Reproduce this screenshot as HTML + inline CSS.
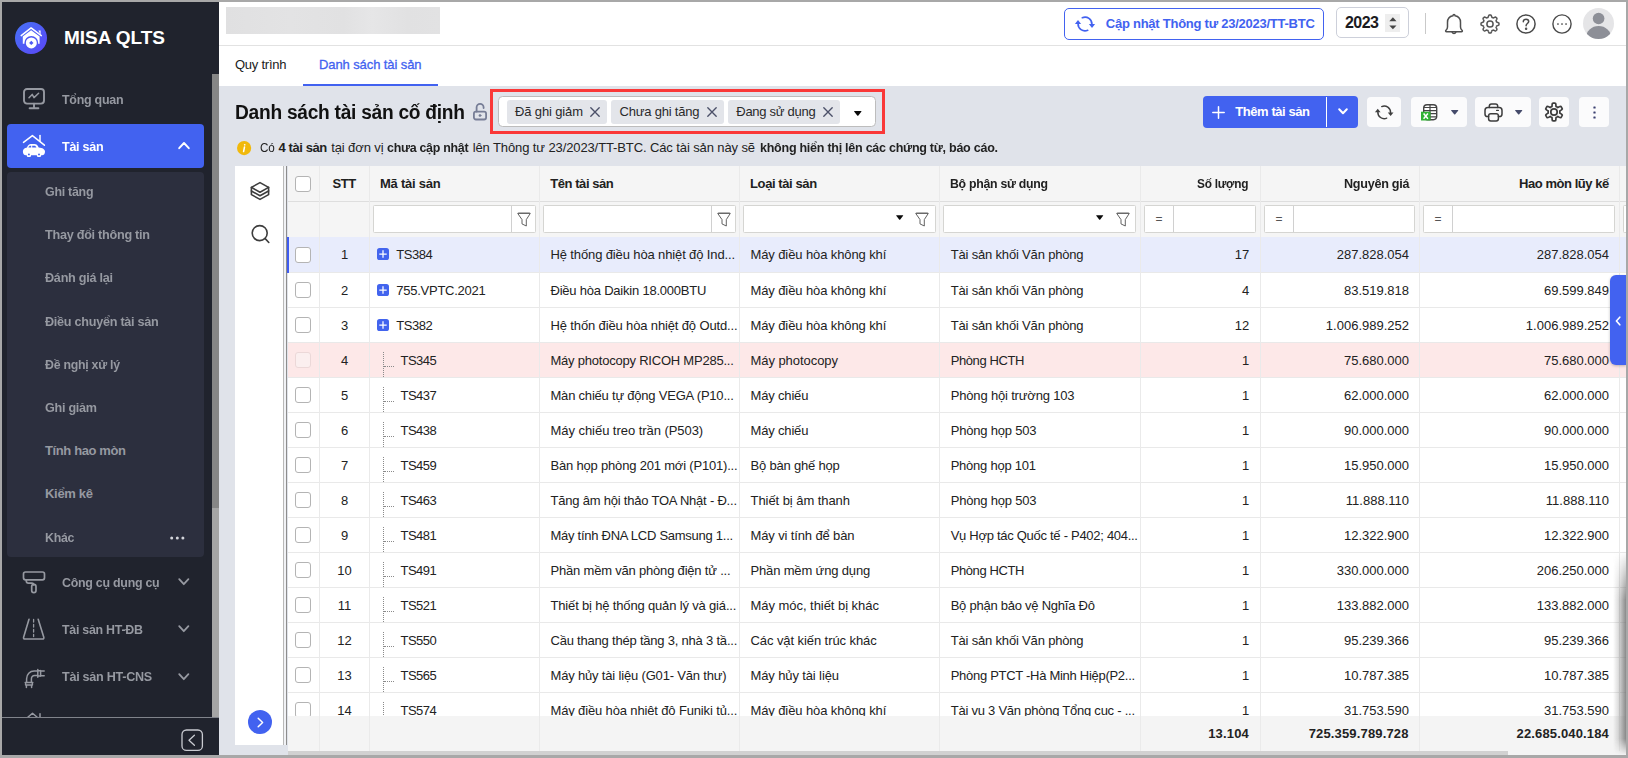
<!DOCTYPE html>
<html lang="vi">
<head>
<meta charset="utf-8">
<title>MISA QLTS - Danh sách tài sản cố định</title>
<style>

*{box-sizing:border-box;margin:0;padding:0}
html,body{width:1628px;height:758px;overflow:hidden;background:#fff}
body{font-family:"Liberation Sans",sans-serif;font-size:13px;color:#212121}
#app{position:absolute;left:0;top:0;width:1628px;height:758px;overflow:hidden;background:#e0e3ea}
.abs,#app div,#app svg,#app nav,#app header,#app aside,#app main,#app section{position:absolute}
svg{overflow:visible}
.side{left:2px;top:2px;width:217px;height:754px;background:#20232d}
.sub{left:7px;top:172px;width:197px;height:385px;background:#2c2f3e;border-radius:4px}
.act{left:7px;top:124px;width:197px;height:44px;background:#4262f0;border-radius:4px}
.top{left:219px;top:2px;width:1407px;height:43px;background:#fff}
.tabs{left:219px;top:46px;width:1407px;height:40px;background:#fff}
.btnw{background:#fbfbfc;border-radius:4px}
.tag{background:#e3e5ea;border-radius:3px;height:24px;top:99.900px}
.cb{width:16px;height:16px;border:1px solid #b4b4b4;border-radius:3px;background:#fff}
.fin{background:#fff;border:1px solid #d5d5d2;border-radius:1.500px;height:27.600px;top:205.100px}

</style>
</head>
<body>
<div id="app">
<aside class="side"></aside>
<svg style="left:15px;top:22px" width="32" height="32" viewBox="0 0 32 32">
<defs><linearGradient id="lg" x1="0" y1="0" x2="1" y2="1"><stop offset="0" stop-color="#4672f6"/><stop offset="1" stop-color="#5b46f6"/></linearGradient></defs>
<circle cx="16" cy="16" r="16" fill="url(#lg)"/>
<path d="M6.2 13.6 L16.1 5.9 L26.3 13.6" fill="none" stroke="#fff" stroke-width="1.5" stroke-linecap="round" stroke-linejoin="round"/>
<path d="M23.3 8.6h2.3v4.2z" fill="#fff"/>
<path d="M16.1 8.2 L24.600 14.600 V21.800 H7.800 V14.600 Z" fill="#fff"/>
<circle cx="16.3" cy="20.900" r="6.9" fill="#5058f5"/>
<circle cx="16.3" cy="20.900" r="5.5" fill="#fff"/>
<path d="M16.3 18.700l2.200 2.200-2.200 2.200-2.200-2.200z" fill="#4e5af5"/>
</svg>
<span style="position:absolute;white-space:nowrap;top:26px;line-height:24px;font-size:19px;color:#fff;font-weight:bold;letter-spacing:-0.041px;left:64.00px;">MISA QLTS</span>
<svg style="left:23px;top:88px" width="22" height="22" viewBox="0 0 22 22" fill="none" stroke="#9699a1" stroke-width="1.900" stroke-linecap="round" stroke-linejoin="round">
<rect x="1" y="1" width="20" height="14.6" rx="3"/><path d="M11 15.8v4.3M6.6 20.3h8.8"/><path d="M6 9.8l3.2-3.4 1.8 3.2 4.6-4.4" stroke-width="1.5"/></svg>
<span style="position:absolute;white-space:nowrap;top:90px;line-height:19px;font-size:13px;color:#9699a1;font-weight:bold;letter-spacing:-0.28px;display:inline-block;transform:scaleX(0.9581);transform-origin:0 50%;left:61.50px;">Tổng quan</span>
<div class="act"></div>
<svg style="left:22px;top:134px" width="24" height="24" viewBox="0 0 24 24">
<path d="M1.500 8.400 L10.400 1.600 L22.400 11.200" fill="none" stroke="#fff" stroke-width="1.500" stroke-linecap="round" stroke-linejoin="round"/>
<path d="M18 1.500v5.800" stroke="#fff" stroke-width="1.500" stroke-linecap="round"/>
<path d="M0.900 17.600 C0.900 15.400 2.600 14 5 13.600 C5.800 11.400 7 10.100 9 10.100 h3.400 c2 0 3.300 1.200 4.300 3.300 C20.500 13.800 23 15.200 23 17.600 c0 2.200-1 3.700-3 3.700 H3.900 C1.900 21.300 .9 19.800 .9 17.600z" fill="#fff"/>
<rect x="4.800" y="19" width="4.200" height="4" rx="1.300" fill="#fff"/><rect x="14.900" y="19" width="4.200" height="4" rx="1.300" fill="#fff"/>
<circle cx="6.900" cy="20.400" r=".95" fill="#4262f0"/><circle cx="17" cy="20.400" r=".95" fill="#4262f0"/>
<path d="M6.400 13.600c.4-1.300 1.100-1.900 2.100-1.900h.7v1.900zM10.200 11.700h2c1.100 0 1.800.6 2.200 1.900h-4.200z" fill="#4262f0"/>
</svg>
<span style="position:absolute;white-space:nowrap;top:137px;line-height:19px;font-size:13px;color:#fff;font-weight:bold;letter-spacing:-0.28px;display:inline-block;transform:scaleX(0.9648);transform-origin:0 50%;left:61.50px;">Tài sản</span>
<svg style="left:178px;top:141px" width="12" height="9" viewBox="0 0 12 9" fill="none" stroke="#fff" stroke-width="1.900" stroke-linecap="round" stroke-linejoin="round"><path d="M1.200 7.200 L6 2 L10.800 7.200"/></svg>
<div class="sub"></div>
<span style="position:absolute;white-space:nowrap;top:182px;line-height:19px;font-size:13px;color:#9699a1;font-weight:bold;letter-spacing:-0.28px;display:inline-block;transform:scaleX(0.9555);transform-origin:0 50%;left:45.00px;">Ghi tăng</span>
<span style="position:absolute;white-space:nowrap;top:225px;line-height:19px;font-size:13px;color:#9699a1;font-weight:bold;letter-spacing:-0.28px;display:inline-block;transform:scaleX(0.9732);transform-origin:0 50%;left:45.00px;">Thay đổi thông tin</span>
<span style="position:absolute;white-space:nowrap;top:268px;line-height:19px;font-size:13px;color:#9699a1;font-weight:bold;letter-spacing:-0.28px;display:inline-block;transform:scaleX(0.9731);transform-origin:0 50%;left:45.00px;">Đánh giá lại</span>
<span style="position:absolute;white-space:nowrap;top:312px;line-height:19px;font-size:13px;color:#9699a1;font-weight:bold;letter-spacing:-0.28px;display:inline-block;transform:scaleX(0.9722);transform-origin:0 50%;left:45.00px;">Điều chuyển tài sản</span>
<span style="position:absolute;white-space:nowrap;top:355px;line-height:19px;font-size:13px;color:#9699a1;font-weight:bold;letter-spacing:-0.28px;display:inline-block;transform:scaleX(0.9492);transform-origin:0 50%;left:45.00px;">Đề nghị xử lý</span>
<span style="position:absolute;white-space:nowrap;top:398px;line-height:19px;font-size:13px;color:#9699a1;font-weight:bold;letter-spacing:-0.28px;display:inline-block;transform:scaleX(0.9691);transform-origin:0 50%;left:45.00px;">Ghi giảm</span>
<span style="position:absolute;white-space:nowrap;top:441px;line-height:19px;font-size:13px;color:#9699a1;font-weight:bold;letter-spacing:-0.383px;left:45.00px;">Tính hao mòn</span>
<span style="position:absolute;white-space:nowrap;top:484px;line-height:19px;font-size:13px;color:#9699a1;font-weight:bold;letter-spacing:-0.31px;left:45.00px;">Kiểm kê</span>
<span style="position:absolute;white-space:nowrap;top:528px;line-height:19px;font-size:13px;color:#9699a1;font-weight:bold;letter-spacing:-0.28px;display:inline-block;transform:scaleX(0.9531);transform-origin:0 50%;left:45.00px;">Khác</span>
<svg style="left:170px;top:535.5px" width="15" height="4" viewBox="0 0 15 4" fill="#d4d6dc"><circle cx="1.700" cy="2" r="1.500"/><circle cx="7.300" cy="2" r="1.500"/><circle cx="12.900" cy="2" r="1.500"/></svg>
<svg style="left:22px;top:571px" width="24" height="23" viewBox="0 0 24 23" fill="none" stroke="#9699a1" stroke-width="1.700" stroke-linecap="round" stroke-linejoin="round">
<rect x="1.500" y="1" width="21" height="7.800" rx="2"/><path d="M4.300 8.800v1.200c0 1.400.8 2.200 2.200 2.200h3.300c1.300 0 2 .6 2 1.700"/><rect x="9.700" y="13.400" width="4.300" height="8.300" rx="2.100"/></svg>
<span style="position:absolute;white-space:nowrap;top:573px;line-height:19px;font-size:13px;color:#9699a1;font-weight:bold;letter-spacing:-0.28px;display:inline-block;transform:scaleX(0.9556);transform-origin:0 50%;left:61.50px;">Công cụ dụng cụ</span>
<svg style="left:178px;top:578px" width="12" height="8" viewBox="0 0 12 8" fill="none" stroke="#9699a1" stroke-width="1.800" stroke-linecap="round" stroke-linejoin="round"><path d="M1.200 1.200 L5.800 6.200 L10.400 1.200"/></svg>
<svg style="left:22px;top:618px" width="24" height="23" viewBox="0 0 24 23" fill="none" stroke="#9699a1" stroke-width="1.600" stroke-linecap="round" stroke-linejoin="round">
<path d="M7 1.200 L1.600 19.200c-.3 1 .2 1.800 1.200 1.800h17.800c1 0 1.500-.8 1.200-1.800L16.200 1.200"/><path d="M11.600 1.500v17" stroke-dasharray="2.600 2.400" stroke-width="1.300"/></svg>
<span style="position:absolute;white-space:nowrap;top:620px;line-height:19px;font-size:13px;color:#9699a1;font-weight:bold;letter-spacing:-0.28px;display:inline-block;transform:scaleX(0.9555);transform-origin:0 50%;left:61.50px;">Tài sản HT-ĐB</span>
<svg style="left:178px;top:625px" width="12" height="8" viewBox="0 0 12 8" fill="none" stroke="#9699a1" stroke-width="1.800" stroke-linecap="round" stroke-linejoin="round"><path d="M1.200 1.200 L5.800 6.200 L10.400 1.200"/></svg>
<svg style="left:24px;top:668px" width="22" height="20" viewBox="0 0 22 20" fill="none" stroke="#9699a1" stroke-width="1.500" stroke-linecap="round" stroke-linejoin="round">
<path d="M2.600 14.200v-3.400c0-4.400 3.200-7.800 7.600-7.800h3.400"/><path d="M7.400 14.200v-3.200c0-2 1.200-3.400 3.200-3.400h3"/><path d="M13.800 1.600v7.600M16.600 2.600v5.600M16.800 3h3.400M16.800 7.800h3.400M13.800 2.800h2.800M13.800 8h2.800"/><path d="M1.200 14.400h7.600M1.600 17h6.800M2.400 17v2.400M7.600 17v2.400M1.600 14.400v2.600M8.400 14.400v2.600"/></svg>
<span style="position:absolute;white-space:nowrap;top:667px;line-height:19px;font-size:13px;color:#9699a1;font-weight:bold;letter-spacing:-0.28px;display:inline-block;transform:scaleX(0.9682);transform-origin:0 50%;left:61.50px;">Tài sản HT-CNS</span>
<svg style="left:178px;top:673px" width="12" height="8" viewBox="0 0 12 8" fill="none" stroke="#9699a1" stroke-width="1.800" stroke-linecap="round" stroke-linejoin="round"><path d="M1.200 1.200 L5.800 6.200 L10.400 1.200"/></svg>
<svg style="left:26px;top:712px" width="18" height="5" viewBox="0 0 18 5" fill="none" stroke="#9699a1" stroke-width="1.500" stroke-linecap="round" stroke-linejoin="round"><path d="M1.500 5.500 L6.500 1.200 L11.500 5.500"/><path d="M14 1.800V5.500"/></svg>
<div style="left:212px;top:74px;width:7px;height:434px;background:#868686"></div>
<div style="left:212px;top:508px;width:7px;height:209px;background:#a5a5a5"></div>
<div style="left:2px;top:717px;width:217px;height:39px;background:#20232d;border-top:1px solid #80838b"></div>
<svg style="left:181px;top:729px" width="22" height="22" viewBox="0 0 22 22" fill="none" stroke="#c9cbd1" stroke-width="1.300" stroke-linecap="round" stroke-linejoin="round"><rect x="1" y="1" width="20.400" height="20.400" rx="4.500"/><path d="M13.400 6.300 L8 11.300 L13.400 16.300"/></svg>
<header class="top"></header>
<div style="left:219px;top:45px;width:1407px;height:1px;background:#e2e2e2"></div>
<div style="left:226px;top:7px;width:214px;height:27px;background:linear-gradient(90deg,#e0e0e1,#e3e3e4 30%,#e1e1e2 55%,#e6e6e7 68%,#e1e1e2 85%,#e2e2e3)"></div>
<div style="left:1064px;top:8px;width:260px;height:32px;border:1px solid #4262f0;border-radius:5px;background:#fff"></div>
<svg style="left:1075px;top:16px" width="20.00" height="16.00" viewBox="0 0 20 16">
<g fill="none" stroke="#4262f0" stroke-width="1.7" stroke-linecap="round"><path d="M7.300 1.700 A6.900 6.900 0 0 1 16.900 8.400"/><path d="M12.700 14.300 A6.900 6.900 0 0 1 3.100 7.600"/></g>
<g fill="#4262f0"><path d="M13.900 8.100 H20.100 L17 11.900z"/><path d="M-0.100 7.900 H6.100 L3 4.100z"/></g></svg>
<span style="position:absolute;white-space:nowrap;top:14px;line-height:19px;font-size:13px;color:#4262f0;font-weight:bold;letter-spacing:-0.249px;left:1105.80px;">Cập nhật Thông tư 23/2023/TT-BTC</span>
<div style="left:1336px;top:7px;width:73px;height:31px;border:1px solid #cdd0da;border-radius:5px;background:#fff"></div>
<span style="position:absolute;white-space:nowrap;top:12px;line-height:22px;font-size:16px;color:#1b1b1f;font-weight:bold;letter-spacing:-0.531px;left:1345.00px;">2023</span>
<div style="left:1385px;top:14px;width:15px;height:18px;background:#eeeeee"></div>
<svg style="left:1388.600px;top:16.600px" width="7.800" height="12.600" viewBox="0 0 8 12.600" fill="#444"><path d="M4 0.200 L7.700 4.300 H0.300z"/><path d="M4 12.500 L7.700 8.600 H0.300z"/></svg>
<div style="left:1425px;top:13px;width:1px;height:21px;background:#c9c9c9"></div>
<svg style="left:1444px;top:13px" width="20" height="22" viewBox="0 0 20 22" fill="none" stroke="#4f4f4f" stroke-width="1.500" stroke-linecap="round" stroke-linejoin="round">
<path d="M8.900 2.800 C5.600 3.400 3.500 6 3.500 9.400 V14 C3.500 15.600 2.900 16.400 2 17.200 C1.300 17.800 1.600 18.800 2.600 18.800 H17.400 C18.400 18.800 18.700 17.800 18 17.200 C17.100 16.400 16.500 15.600 16.500 14 V9.400 C16.500 6 14.400 3.400 11.100 2.800 C11 1.900 10.600 1.400 10 1.400 C9.400 1.400 9 1.900 8.900 2.800z"/><path d="M8.200 19.300c.3.800 1 1.200 1.800 1.200s1.500-.4 1.800-1.200"/></svg>
<svg style="left:1477.90px;top:11.95px" width="24" height="24" viewBox="0 0 24 24" fill="none" stroke="#555" stroke-width="1.5" stroke-linejoin="round"><path d="M12.00 3.05 L12.29 3.05 L12.59 3.07 L12.88 3.09 L13.13 3.39 L13.35 3.80 L13.54 4.25 L13.70 4.70 L13.84 5.13 L13.99 5.44 L14.20 5.51 L14.41 5.59 L14.62 5.67 L14.83 5.76 L15.03 5.86 L15.23 5.96 L15.56 5.84 L15.96 5.64 L16.39 5.43 L16.84 5.25 L17.29 5.11 L17.68 5.08 L17.90 5.27 L18.12 5.47 L18.33 5.67 L18.53 5.88 L18.73 6.10 L18.92 6.32 L18.89 6.71 L18.75 7.16 L18.57 7.61 L18.36 8.04 L18.16 8.44 L18.04 8.77 L18.14 8.97 L18.24 9.17 L18.33 9.38 L18.41 9.59 L18.49 9.80 L18.56 10.01 L18.87 10.16 L19.30 10.30 L19.75 10.46 L20.20 10.65 L20.61 10.87 L20.91 11.12 L20.93 11.41 L20.95 11.71 L20.95 12.00 L20.95 12.29 L20.93 12.59 L20.91 12.88 L20.61 13.13 L20.20 13.35 L19.75 13.54 L19.30 13.70 L18.87 13.84 L18.56 13.99 L18.49 14.20 L18.41 14.41 L18.33 14.62 L18.24 14.83 L18.14 15.03 L18.04 15.23 L18.16 15.56 L18.36 15.96 L18.57 16.39 L18.75 16.84 L18.89 17.29 L18.92 17.68 L18.73 17.90 L18.53 18.12 L18.33 18.33 L18.12 18.53 L17.90 18.73 L17.68 18.92 L17.29 18.89 L16.84 18.75 L16.39 18.57 L15.96 18.36 L15.56 18.16 L15.23 18.04 L15.03 18.14 L14.83 18.24 L14.62 18.33 L14.41 18.41 L14.20 18.49 L13.99 18.56 L13.84 18.87 L13.70 19.30 L13.54 19.75 L13.35 20.20 L13.13 20.61 L12.88 20.91 L12.59 20.93 L12.29 20.95 L12.00 20.95 L11.71 20.95 L11.41 20.93 L11.12 20.91 L10.87 20.61 L10.65 20.20 L10.46 19.75 L10.30 19.30 L10.16 18.87 L10.01 18.56 L9.80 18.49 L9.59 18.41 L9.38 18.33 L9.17 18.24 L8.97 18.14 L8.77 18.04 L8.44 18.16 L8.04 18.36 L7.61 18.57 L7.16 18.75 L6.71 18.89 L6.32 18.92 L6.10 18.73 L5.88 18.53 L5.67 18.33 L5.47 18.12 L5.27 17.90 L5.08 17.68 L5.11 17.29 L5.25 16.84 L5.43 16.39 L5.64 15.96 L5.84 15.56 L5.96 15.23 L5.86 15.03 L5.76 14.83 L5.67 14.62 L5.59 14.41 L5.51 14.20 L5.44 13.99 L5.13 13.84 L4.70 13.70 L4.25 13.54 L3.80 13.35 L3.39 13.13 L3.09 12.88 L3.07 12.59 L3.05 12.29 L3.05 12.00 L3.05 11.71 L3.07 11.41 L3.09 11.12 L3.39 10.87 L3.80 10.65 L4.25 10.46 L4.70 10.30 L5.13 10.16 L5.44 10.01 L5.51 9.80 L5.59 9.59 L5.67 9.38 L5.76 9.17 L5.86 8.97 L5.96 8.77 L5.84 8.44 L5.64 8.04 L5.43 7.61 L5.25 7.16 L5.11 6.71 L5.08 6.32 L5.27 6.10 L5.47 5.88 L5.67 5.67 L5.88 5.47 L6.10 5.27 L6.32 5.08 L6.71 5.11 L7.16 5.25 L7.61 5.43 L8.04 5.64 L8.44 5.84 L8.77 5.96 L8.97 5.86 L9.17 5.76 L9.38 5.67 L9.59 5.59 L9.80 5.51 L10.01 5.44 L10.16 5.13 L10.30 4.70 L10.46 4.25 L10.65 3.80 L10.87 3.39 L11.12 3.09 L11.41 3.07 L11.71 3.05Z"/><circle cx="12" cy="12" r="3.1"/></svg>
<svg style="left:1516px;top:14px" width="20" height="20" viewBox="0 0 20 20" fill="none" stroke="#4a4a4a" stroke-width="1.500" stroke-linecap="round"><circle cx="10" cy="10" r="9.100"/><path d="M7.300 7.800c0-1.600 1.200-2.600 2.700-2.600s2.700 1 2.700 2.400c0 1.900-2.600 2-2.600 4.100"/><circle cx="10.100" cy="14.700" r=".5" fill="#4a4a4a"/></svg>
<svg style="left:1552px;top:14px" width="20" height="20" viewBox="0 0 20 20" fill="none" stroke="#4a4a4a" stroke-width="1.400"><circle cx="10" cy="10" r="9.100"/><g fill="#4a4a4a" stroke="none"><rect x="5.200" y="9.300" width="1.500" height="1.500"/><rect x="9.250" y="9.300" width="1.500" height="1.500"/><rect x="13.300" y="9.300" width="1.500" height="1.500"/></g></svg>
<svg style="left:1582.500px;top:8.400px" width="31" height="31" viewBox="0 0 31 31"><defs><clipPath id="av"><circle cx="15.500" cy="15.500" r="15.500"/></clipPath></defs><circle cx="15.500" cy="15.500" r="15.500" fill="#e5e5e7"/><g clip-path="url(#av)" fill="#8d8f97"><circle cx="15.600" cy="10.500" r="5.800"/><ellipse cx="15.600" cy="29.600" rx="12.600" ry="11.600"/></g></svg>
<nav class="tabs"></nav>
<span style="position:absolute;white-space:nowrap;top:55px;line-height:19px;font-size:13px;color:#212121;letter-spacing:-0.246px;left:235.00px;">Quy trình</span>
<span style="position:absolute;white-space:nowrap;top:55px;line-height:19px;font-size:13px;color:#4262f0;letter-spacing:-0.098px;left:319.00px;-webkit-text-stroke:.3px #4262f0;">Danh sách tài sản</span>
<div style="left:303px;top:84px;width:135px;height:2px;background:#4262f0"></div>
<span style="position:absolute;white-space:nowrap;top:99px;line-height:26px;font-size:20px;color:#111;font-weight:bold;letter-spacing:-0.28px;display:inline-block;transform:scaleX(0.9583);transform-origin:0 50%;left:235.00px;">Danh sách tài sản cố định</span>
<svg style="left:472px;top:102px" width="16" height="19" viewBox="0 0 16 19" fill="none" stroke="#767d96" stroke-width="1.800" stroke-linecap="round" stroke-linejoin="round">
<rect x="1.900" y="9.700" width="12.200" height="7.800" rx="2"/><path d="M4.600 9.500V5.300a3.500 3.500 0 0 1 7 0v.8"/><circle cx="8" cy="13.500" r="1.100" fill="#767d96" stroke-width=".6"/></svg>
<div style="left:490.200px;top:89px;width:394.800px;height:44.700px;border:3px solid #fa3838"></div>
<div style="left:498.300px;top:96.200px;width:377.700px;height:31.300px;background:#fff;border:1px solid #bdbdbd;border-radius:4.500px"></div>
<div class="tag" style="left:507px;width:100px"></div>
<span style="position:absolute;white-space:nowrap;top:102px;line-height:19px;font-size:13px;color:#2a2a2a;letter-spacing:-0.137px;left:515.00px;">Đã ghi giảm</span>
<svg style="left:590px;top:107px" width="10" height="10" viewBox="0 0 10 10" stroke="#4b5068" stroke-width="1.350" stroke-linecap="round"><path d="M0.800 0.800 L9.200 9.200 M9.200 0.800 L0.800 9.200"/></svg>
<div class="tag" style="left:611px;width:113px"></div>
<span style="position:absolute;white-space:nowrap;top:102px;line-height:19px;font-size:13px;color:#2a2a2a;letter-spacing:-0.202px;left:619.50px;">Chưa ghi tăng</span>
<svg style="left:707px;top:107px" width="10" height="10" viewBox="0 0 10 10" stroke="#4b5068" stroke-width="1.350" stroke-linecap="round"><path d="M0.800 0.800 L9.200 9.200 M9.200 0.800 L0.800 9.200"/></svg>
<div class="tag" style="left:728px;width:112px"></div>
<span style="position:absolute;white-space:nowrap;top:102px;line-height:19px;font-size:13px;color:#2a2a2a;letter-spacing:-0.275px;left:736.30px;">Đang sử dụng</span>
<svg style="left:823px;top:107px" width="10" height="10" viewBox="0 0 10 10" stroke="#4b5068" stroke-width="1.350" stroke-linecap="round"><path d="M0.800 0.800 L9.200 9.200 M9.200 0.800 L0.800 9.200"/></svg>
<svg style="left:853.700px;top:110.900px" width="7.600" height="4.900" viewBox="0 0 8 5" fill="#0a0a0a"><path d="M0.600 0 H7.400 Q8.300 0 7.700 0.800 L4.600 4.600 Q4 5.200 3.400 4.600 L0.300 0.800 Q-0.300 0 0.600 0z"/></svg>
<div style="left:1203px;top:96px;width:155px;height:32px;background:#4262f0;border-radius:4px"></div>
<div style="left:1326px;top:97px;width:1px;height:30px;background:#fff"></div>
<svg style="left:1212px;top:105.500px" width="13" height="13" viewBox="0 0 13 13" stroke="#fff" stroke-width="1.500" stroke-linecap="round"><path d="M6.500 0.800 V12.200 M0.800 6.500 H12.200"/></svg>
<span style="position:absolute;white-space:nowrap;top:102px;line-height:19px;font-size:13px;color:#fff;font-weight:bold;letter-spacing:-0.434px;left:1235.30px;">Thêm tài sản</span>
<svg style="left:1337.500px;top:108px" width="10" height="7" viewBox="0 0 10 7" fill="none" stroke="#fff" stroke-width="2" stroke-linecap="round" stroke-linejoin="round"><path d="M1.200 1.200 L5 5.200 L8.800 1.200"/></svg>
<div class="btnw" style="left:1367px;top:97px;width:34px;height:30px"></div>
<svg style="left:1374.8px;top:104.8px" width="18.40" height="14.72" viewBox="0 0 20 16">
<g fill="none" stroke="#3f3f3f" stroke-width="1.6" stroke-linecap="round"><path d="M7.300 1.700 A6.900 6.900 0 0 1 16.900 8.400"/><path d="M12.700 14.300 A6.900 6.900 0 0 1 3.100 7.600"/></g>
<g fill="#3f3f3f"><path d="M13.900 8.100 H20.100 L17 11.900z"/><path d="M-0.100 7.900 H6.100 L3 4.100z"/></g></svg>
<div class="btnw" style="left:1411px;top:97px;width:56px;height:30px"></div>
<svg style="left:1421px;top:104px" width="17" height="17" viewBox="0 0 17 17">
<rect x="2.700" y=".700" width="13" height="15" rx="3.400" fill="#fff" stroke="#444" stroke-width="1.400"/>
<path d="M2.700 3.500H15.700M2.700 6.700H15.700M2.700 9.700H15.700M2.700 12.900H15.700M9 .700V15.700" stroke="#444" stroke-width="1.200"/>
<rect x="0" y="7.700" width="9.500" height="8.800" fill="#30b233"/>
<path d="M2.600 9.500 L6.900 14.700 M6.900 9.500 L2.600 14.700" stroke="#fff" stroke-width="1.500"/></svg>
<svg style="left:1450.8px;top:110.100px" width="7.400" height="4.800" viewBox="0 0 8 5" fill="#454b6b"><path d="M0.600 0 H7.400 Q8.300 0 7.700 0.800 L4.600 4.600 Q4 5.200 3.400 4.600 L0.300 0.800 Q-0.300 0 0.600 0z"/></svg>
<div class="btnw" style="left:1475px;top:97px;width:56px;height:30px"></div>
<svg style="left:1483.600px;top:102.900px" width="19" height="19" viewBox="0 0 19 19" fill="none" stroke="#3d3d3d" stroke-width="1.500" stroke-linecap="round" stroke-linejoin="round">
<path d="M5.300 4.600V3.200c0-1.300.9-2.200 2.200-2.200h4c1.300 0 2.200.9 2.200 2.200v1.400"/>
<path d="M4.600 13.600H3.600C2 13.600 1 12.500 1 11V7.400c0-1.700 1.200-2.800 2.800-2.800h11.400c1.600 0 2.800 1.100 2.800 2.800V11c0 1.500-1 2.600-2.600 2.600h-1"/>
<rect x="4.600" y="10.800" width="9.800" height="7.200" rx="2.200"/><path d="M12.600 7.400h1.800" stroke-width="1.200"/></svg>
<svg style="left:1514.8px;top:110.100px" width="7.400" height="4.800" viewBox="0 0 8 5" fill="#454b6b"><path d="M0.600 0 H7.400 Q8.300 0 7.700 0.800 L4.600 4.600 Q4 5.200 3.400 4.600 L0.300 0.800 Q-0.300 0 0.600 0z"/></svg>
<div class="btnw" style="left:1539px;top:97px;width:30px;height:30px"></div>
<svg style="left:1541.90px;top:100.15px" width="24" height="24" viewBox="0 0 24 24" fill="none" stroke="#3d3d3d" stroke-width="1.7" stroke-linejoin="round"><path d="M12.00 3.15 L12.39 3.16 L12.77 3.18 L13.16 3.23 L13.54 3.28 L13.78 3.99 L13.90 4.90 L13.95 5.80 L14.00 6.50 L14.24 6.60 L14.47 6.70 L14.70 6.81 L14.92 6.93 L15.14 7.07 L15.36 7.21 L15.56 7.36 L15.76 7.52 L16.39 7.21 L17.20 6.80 L18.05 6.46 L18.78 6.31 L19.02 6.61 L19.25 6.92 L19.46 7.24 L19.66 7.57 L19.85 7.91 L20.02 8.26 L20.18 8.61 L20.32 8.97 L19.82 9.53 L19.10 10.10 L18.34 10.59 L17.76 10.98 L17.80 11.24 L17.83 11.49 L17.84 11.74 L17.85 12.00 L17.84 12.26 L17.83 12.51 L17.80 12.76 L17.76 13.02 L18.34 13.41 L19.10 13.90 L19.82 14.47 L20.32 15.03 L20.18 15.39 L20.02 15.74 L19.85 16.09 L19.66 16.42 L19.46 16.76 L19.25 17.08 L19.02 17.39 L18.78 17.69 L18.05 17.54 L17.20 17.20 L16.39 16.79 L15.76 16.48 L15.56 16.64 L15.36 16.79 L15.14 16.93 L14.93 17.07 L14.70 17.19 L14.47 17.30 L14.24 17.40 L14.00 17.50 L13.95 18.20 L13.90 19.10 L13.78 20.01 L13.54 20.72 L13.16 20.77 L12.77 20.82 L12.39 20.84 L12.00 20.85 L11.61 20.84 L11.23 20.82 L10.84 20.77 L10.46 20.72 L10.22 20.01 L10.10 19.10 L10.05 18.20 L10.00 17.50 L9.76 17.40 L9.53 17.30 L9.30 17.19 L9.07 17.07 L8.86 16.93 L8.64 16.79 L8.44 16.64 L8.24 16.48 L7.61 16.79 L6.80 17.20 L5.95 17.54 L5.22 17.69 L4.98 17.39 L4.75 17.08 L4.54 16.76 L4.34 16.43 L4.15 16.09 L3.98 15.74 L3.82 15.39 L3.68 15.03 L4.18 14.47 L4.90 13.90 L5.66 13.41 L6.24 13.02 L6.20 12.76 L6.17 12.51 L6.16 12.26 L6.15 12.00 L6.16 11.74 L6.17 11.49 L6.20 11.24 L6.24 10.98 L5.66 10.59 L4.90 10.10 L4.18 9.53 L3.68 8.97 L3.82 8.61 L3.98 8.26 L4.15 7.91 L4.34 7.58 L4.54 7.24 L4.75 6.92 L4.98 6.61 L5.22 6.31 L5.95 6.46 L6.80 6.80 L7.61 7.21 L8.24 7.52 L8.44 7.36 L8.64 7.21 L8.86 7.07 L9.08 6.93 L9.30 6.81 L9.53 6.70 L9.76 6.60 L10.00 6.50 L10.05 5.80 L10.10 4.90 L10.22 3.99 L10.46 3.28 L10.84 3.23 L11.23 3.18 L11.61 3.16Z"/><circle cx="12" cy="12" r="3.2"/></svg>
<div class="btnw" style="left:1579px;top:97px;width:30px;height:30px"></div>
<svg style="left:1592.500px;top:105.500px" width="3" height="13" viewBox="0 0 3 13" fill="#3a3f70"><rect x=".4" y=".4" width="2.200" height="2.200" rx=".5"/><rect x=".4" y="5.400" width="2.200" height="2.200" rx=".5"/><rect x=".4" y="10.400" width="2.200" height="2.200" rx=".5"/></svg>
<svg style="left:236.900px;top:140.800px" width="14.200" height="14.200" viewBox="0 0 14 14"><circle cx="7" cy="7" r="7" fill="#f1b90c"/><circle cx="7.600" cy="3.700" r=".85" fill="#fff"/><path d="M7.400 5.900 L6.500 10.400" stroke="#fff" stroke-width="1.500" stroke-linecap="round"/></svg>
<span style="position:absolute;white-space:nowrap;top:138px;line-height:19px;font-size:13px;color:#222;letter-spacing:-0.15px;display:inline-block;transform:scaleX(0.8987);transform-origin:0 50%;left:259.50px;">Có</span>
<span style="position:absolute;white-space:nowrap;top:138px;line-height:19px;font-size:13px;color:#222;font-weight:bold;letter-spacing:-0.391px;left:278.40px;">4 tài sản</span>
<span style="position:absolute;white-space:nowrap;top:138px;line-height:19px;font-size:13px;color:#222;letter-spacing:-0.103px;left:331.20px;">tại đơn vị</span>
<span style="position:absolute;white-space:nowrap;top:138px;line-height:19px;font-size:13px;color:#222;font-weight:bold;letter-spacing:-0.28px;display:inline-block;transform:scaleX(0.9541);transform-origin:0 50%;left:387.20px;">chưa cập nhật</span>
<span style="position:absolute;white-space:nowrap;top:138px;line-height:19px;font-size:13px;color:#222;letter-spacing:-0.109px;left:472.70px;">lên Thông tư 23/2023/TT-BTC. Các tài sản này sẽ</span>
<span style="position:absolute;white-space:nowrap;top:138px;line-height:19px;font-size:13px;color:#222;font-weight:bold;letter-spacing:-0.28px;display:inline-block;transform:scaleX(0.9647);transform-origin:0 50%;left:759.60px;">không hiển thị lên các chứng từ, báo cáo.</span>
<div style="left:235px;top:166px;width:48px;height:579px;background:#fff"></div>
<svg style="left:250px;top:181px" width="20" height="20" viewBox="0 0 20 20" fill="none" stroke="#3d3d3d" stroke-width="1.600" stroke-linejoin="round" stroke-linecap="round">
<path d="M10 1.600 L18.600 6.400 L10 11.200 L1.400 6.400z"/><path d="M1.400 6.400v7.200 L10 18.400 L18.600 13.600 V6.400"/><path d="M1.400 10 L10 14.800 L18.600 10"/></svg>
<svg style="left:250px;top:224px" width="20" height="20" viewBox="0 0 20 20" fill="none" stroke="#3d3d3d" stroke-width="1.600" stroke-linecap="round"><circle cx="9.700" cy="9.100" r="7.500"/><path d="M15.200 14.600 L18.800 18.500"/></svg>
<div style="left:248px;top:710px;width:24px;height:24px;border-radius:12px;background:#4262f0"></div>
<svg style="left:256.500px;top:716.500px" width="7" height="11" viewBox="0 0 7 11" fill="none" stroke="#fff" stroke-width="1.500" stroke-linecap="round" stroke-linejoin="round"><path d="M1.200 1.200 L5.600 5.500 L1.200 9.800"/></svg>
<div style="left:283px;top:166px;width:1px;height:579px;background:#b9b9b9"></div>
<div style="left:284px;top:166px;width:2.400px;height:579px;background:#f1f2f5"></div>
<div style="left:286.300px;top:166px;width:1.200px;height:579px;background:#8d8d8d"></div>
<section style="left:287.5px;top:166px;width:1338.5px;height:585px;background:#fff"></section>
<div style="left:287.5px;top:166px;width:1338.5px;height:70.600px;background:#f5f5f5"></div>
<div style="left:287.5px;top:201px;width:1338.5px;height:1px;background:#dedede"></div>
<div style="left:0;top:0;width:1628px;height:716.3px;overflow:hidden">
<div style="left:287.5px;top:237.00px;width:1338.5px;height:35.6px;background:#e8ecfc"></div>
<div style="left:287.5px;top:272px;width:1338.5px;height:1px;background:#e9e9e9"></div>
<div style="left:287.0px;top:237.00px;width:2.100px;height:35.6px;background:#3f5cf0"></div>
<div class="cb" style="left:295px;top:247px"></div>
<span style="position:absolute;white-space:nowrap;top:245px;line-height:19px;font-size:13px;color:#222;left:340.98px;">1</span>
<svg style="left:377px;top:248.30px" width="12" height="12" viewBox="0 0 12 12"><rect width="12" height="12" rx="2.600" fill="#4264ee"/><path d="M6 2.300v7.400M2.300 6h7.400" stroke="#fff" stroke-width="1.250"/></svg>
<span style="position:absolute;white-space:nowrap;top:245px;line-height:19px;font-size:13px;color:#222;letter-spacing:-0.451px;left:396.30px;">TS384</span>
<span style="position:absolute;white-space:nowrap;top:245px;line-height:19px;font-size:13px;color:#222;letter-spacing:-0.127px;left:550.50px;">Hệ thống điều hòa nhiệt độ Ind...</span>
<span style="position:absolute;white-space:nowrap;top:245px;line-height:19px;font-size:13px;color:#222;letter-spacing:-0.107px;left:750.50px;">Máy điều hòa không khí</span>
<span style="position:absolute;white-space:nowrap;top:245px;line-height:19px;font-size:13px;color:#222;letter-spacing:-0.176px;left:950.70px;">Tài sản khối Văn phòng</span>
<span style="position:absolute;white-space:nowrap;top:245px;line-height:19px;font-size:13px;color:#222;right:378.80px;">17</span>
<span style="position:absolute;white-space:nowrap;top:245px;line-height:19px;font-size:13px;color:#222;right:219.00px;">287.828.054</span>
<span style="position:absolute;white-space:nowrap;top:245px;line-height:19px;font-size:13px;color:#222;right:19.00px;">287.828.054</span>
<div style="left:287.5px;top:307px;width:1338.5px;height:1px;background:#e9e9e9"></div>
<div class="cb" style="left:295px;top:282px"></div>
<span style="position:absolute;white-space:nowrap;top:281px;line-height:19px;font-size:13px;color:#222;left:340.98px;">2</span>
<svg style="left:377px;top:284.30px" width="12" height="12" viewBox="0 0 12 12"><rect width="12" height="12" rx="2.600" fill="#4264ee"/><path d="M6 2.300v7.400M2.300 6h7.400" stroke="#fff" stroke-width="1.250"/></svg>
<span style="position:absolute;white-space:nowrap;top:281px;line-height:19px;font-size:13px;color:#222;letter-spacing:-0.259px;left:396.30px;">755.VPTC.2021</span>
<span style="position:absolute;white-space:nowrap;top:281px;line-height:19px;font-size:13px;color:#222;letter-spacing:-0.219px;left:550.50px;">Điều hòa Daikin 18.000BTU</span>
<span style="position:absolute;white-space:nowrap;top:281px;line-height:19px;font-size:13px;color:#222;letter-spacing:-0.107px;left:750.50px;">Máy điều hòa không khí</span>
<span style="position:absolute;white-space:nowrap;top:281px;line-height:19px;font-size:13px;color:#222;letter-spacing:-0.176px;left:950.70px;">Tài sản khối Văn phòng</span>
<span style="position:absolute;white-space:nowrap;top:281px;line-height:19px;font-size:13px;color:#222;right:378.80px;">4</span>
<span style="position:absolute;white-space:nowrap;top:281px;line-height:19px;font-size:13px;color:#222;right:219.00px;">83.519.818</span>
<span style="position:absolute;white-space:nowrap;top:281px;line-height:19px;font-size:13px;color:#222;right:19.00px;">69.599.849</span>
<div style="left:287.5px;top:342px;width:1338.5px;height:1px;background:#e9e9e9"></div>
<div class="cb" style="left:295px;top:317px"></div>
<span style="position:absolute;white-space:nowrap;top:316px;line-height:19px;font-size:13px;color:#222;left:340.98px;">3</span>
<svg style="left:377px;top:319.30px" width="12" height="12" viewBox="0 0 12 12"><rect width="12" height="12" rx="2.600" fill="#4264ee"/><path d="M6 2.300v7.400M2.300 6h7.400" stroke="#fff" stroke-width="1.250"/></svg>
<span style="position:absolute;white-space:nowrap;top:316px;line-height:19px;font-size:13px;color:#222;letter-spacing:-0.451px;left:396.30px;">TS382</span>
<span style="position:absolute;white-space:nowrap;top:316px;line-height:19px;font-size:13px;color:#222;letter-spacing:-0.138px;left:550.50px;">Hệ thốn điều hòa nhiệt độ Outd...</span>
<span style="position:absolute;white-space:nowrap;top:316px;line-height:19px;font-size:13px;color:#222;letter-spacing:-0.107px;left:750.50px;">Máy điều hòa không khí</span>
<span style="position:absolute;white-space:nowrap;top:316px;line-height:19px;font-size:13px;color:#222;letter-spacing:-0.176px;left:950.70px;">Tài sản khối Văn phòng</span>
<span style="position:absolute;white-space:nowrap;top:316px;line-height:19px;font-size:13px;color:#222;right:378.80px;">12</span>
<span style="position:absolute;white-space:nowrap;top:316px;line-height:19px;font-size:13px;color:#222;right:219.00px;">1.006.989.252</span>
<span style="position:absolute;white-space:nowrap;top:316px;line-height:19px;font-size:13px;color:#222;right:19.00px;">1.006.989.252</span>
<div style="left:287.5px;top:342.60px;width:1338.5px;height:35px;background:#fde8e8"></div>
<div style="left:287.5px;top:377px;width:1338.5px;height:1px;background:#e9e9e9"></div>
<div class="cb" style="left:295px;top:352px;background:#fbefef;border-color:#ecd8d8"></div>
<span style="position:absolute;white-space:nowrap;top:351px;line-height:19px;font-size:13px;color:#222;left:340.98px;">4</span>
<div style="left:383px;top:351.60px;width:0;height:25.50px;border-left:1px dotted #8a8a8a"></div>
<div style="left:384px;top:366.10px;width:10px;height:0;border-top:1px dotted #8a8a8a"></div>
<span style="position:absolute;white-space:nowrap;top:351px;line-height:19px;font-size:13px;color:#222;letter-spacing:-0.501px;left:400.50px;">TS345</span>
<span style="position:absolute;white-space:nowrap;top:351px;line-height:19px;font-size:13px;color:#222;letter-spacing:-0.222px;left:550.50px;">Máy photocopy RICOH MP285...</span>
<span style="position:absolute;white-space:nowrap;top:351px;line-height:19px;font-size:13px;color:#222;letter-spacing:-0.056px;left:750.50px;">Máy photocopy</span>
<span style="position:absolute;white-space:nowrap;top:351px;line-height:19px;font-size:13px;color:#222;letter-spacing:-0.401px;left:950.70px;">Phòng HCTH</span>
<span style="position:absolute;white-space:nowrap;top:351px;line-height:19px;font-size:13px;color:#222;right:378.80px;">1</span>
<span style="position:absolute;white-space:nowrap;top:351px;line-height:19px;font-size:13px;color:#222;right:219.00px;">75.680.000</span>
<span style="position:absolute;white-space:nowrap;top:351px;line-height:19px;font-size:13px;color:#222;right:19.00px;">75.680.000</span>
<div style="left:287.5px;top:412px;width:1338.5px;height:1px;background:#e9e9e9"></div>
<div class="cb" style="left:295px;top:387px"></div>
<span style="position:absolute;white-space:nowrap;top:386px;line-height:19px;font-size:13px;color:#222;left:340.98px;">5</span>
<div style="left:383px;top:386.60px;width:0;height:25.50px;border-left:1px dotted #8a8a8a"></div>
<div style="left:384px;top:401.10px;width:10px;height:0;border-top:1px dotted #8a8a8a"></div>
<span style="position:absolute;white-space:nowrap;top:386px;line-height:19px;font-size:13px;color:#222;letter-spacing:-0.501px;left:400.50px;">TS437</span>
<span style="position:absolute;white-space:nowrap;top:386px;line-height:19px;font-size:13px;color:#222;letter-spacing:-0.209px;left:550.50px;">Màn chiếu tự động VEGA (P10...</span>
<span style="position:absolute;white-space:nowrap;top:386px;line-height:19px;font-size:13px;color:#222;letter-spacing:-0.169px;left:750.50px;">Máy chiếu</span>
<span style="position:absolute;white-space:nowrap;top:386px;line-height:19px;font-size:13px;color:#222;letter-spacing:-0.168px;left:950.70px;">Phòng hội trường 103</span>
<span style="position:absolute;white-space:nowrap;top:386px;line-height:19px;font-size:13px;color:#222;right:378.80px;">1</span>
<span style="position:absolute;white-space:nowrap;top:386px;line-height:19px;font-size:13px;color:#222;right:219.00px;">62.000.000</span>
<span style="position:absolute;white-space:nowrap;top:386px;line-height:19px;font-size:13px;color:#222;right:19.00px;">62.000.000</span>
<div style="left:287.5px;top:447px;width:1338.5px;height:1px;background:#e9e9e9"></div>
<div class="cb" style="left:295px;top:422px"></div>
<span style="position:absolute;white-space:nowrap;top:421px;line-height:19px;font-size:13px;color:#222;left:340.98px;">6</span>
<div style="left:383px;top:421.60px;width:0;height:25.50px;border-left:1px dotted #8a8a8a"></div>
<div style="left:384px;top:436.10px;width:10px;height:0;border-top:1px dotted #8a8a8a"></div>
<span style="position:absolute;white-space:nowrap;top:421px;line-height:19px;font-size:13px;color:#222;letter-spacing:-0.501px;left:400.50px;">TS438</span>
<span style="position:absolute;white-space:nowrap;top:421px;line-height:19px;font-size:13px;color:#222;letter-spacing:-0.049px;left:550.50px;">Máy chiếu treo trần (P503)</span>
<span style="position:absolute;white-space:nowrap;top:421px;line-height:19px;font-size:13px;color:#222;letter-spacing:-0.169px;left:750.50px;">Máy chiếu</span>
<span style="position:absolute;white-space:nowrap;top:421px;line-height:19px;font-size:13px;color:#222;letter-spacing:-0.192px;left:950.70px;">Phòng họp 503</span>
<span style="position:absolute;white-space:nowrap;top:421px;line-height:19px;font-size:13px;color:#222;right:378.80px;">1</span>
<span style="position:absolute;white-space:nowrap;top:421px;line-height:19px;font-size:13px;color:#222;right:219.00px;">90.000.000</span>
<span style="position:absolute;white-space:nowrap;top:421px;line-height:19px;font-size:13px;color:#222;right:19.00px;">90.000.000</span>
<div style="left:287.5px;top:482px;width:1338.5px;height:1px;background:#e9e9e9"></div>
<div class="cb" style="left:295px;top:457px"></div>
<span style="position:absolute;white-space:nowrap;top:456px;line-height:19px;font-size:13px;color:#222;left:340.98px;">7</span>
<div style="left:383px;top:456.60px;width:0;height:25.50px;border-left:1px dotted #8a8a8a"></div>
<div style="left:384px;top:471.10px;width:10px;height:0;border-top:1px dotted #8a8a8a"></div>
<span style="position:absolute;white-space:nowrap;top:456px;line-height:19px;font-size:13px;color:#222;letter-spacing:-0.501px;left:400.50px;">TS459</span>
<span style="position:absolute;white-space:nowrap;top:456px;line-height:19px;font-size:13px;color:#222;letter-spacing:-0.191px;left:550.50px;">Bàn họp phòng 201 mới (P101)...</span>
<span style="position:absolute;white-space:nowrap;top:456px;line-height:19px;font-size:13px;color:#222;letter-spacing:-0.201px;left:750.50px;">Bộ bàn ghế họp</span>
<span style="position:absolute;white-space:nowrap;top:456px;line-height:19px;font-size:13px;color:#222;letter-spacing:-0.242px;left:950.70px;">Phòng họp 101</span>
<span style="position:absolute;white-space:nowrap;top:456px;line-height:19px;font-size:13px;color:#222;right:378.80px;">1</span>
<span style="position:absolute;white-space:nowrap;top:456px;line-height:19px;font-size:13px;color:#222;right:219.00px;">15.950.000</span>
<span style="position:absolute;white-space:nowrap;top:456px;line-height:19px;font-size:13px;color:#222;right:19.00px;">15.950.000</span>
<div style="left:287.5px;top:517px;width:1338.5px;height:1px;background:#e9e9e9"></div>
<div class="cb" style="left:295px;top:492px"></div>
<span style="position:absolute;white-space:nowrap;top:491px;line-height:19px;font-size:13px;color:#222;left:340.98px;">8</span>
<div style="left:383px;top:491.60px;width:0;height:25.50px;border-left:1px dotted #8a8a8a"></div>
<div style="left:384px;top:506.10px;width:10px;height:0;border-top:1px dotted #8a8a8a"></div>
<span style="position:absolute;white-space:nowrap;top:491px;line-height:19px;font-size:13px;color:#222;letter-spacing:-0.501px;left:400.50px;">TS463</span>
<span style="position:absolute;white-space:nowrap;top:491px;line-height:19px;font-size:13px;color:#222;letter-spacing:-0.215px;left:550.50px;">Tăng âm hội thảo TOA Nhật - Đ...</span>
<span style="position:absolute;white-space:nowrap;top:491px;line-height:19px;font-size:13px;color:#222;letter-spacing:-0.059px;left:750.50px;">Thiết bị âm thanh</span>
<span style="position:absolute;white-space:nowrap;top:491px;line-height:19px;font-size:13px;color:#222;letter-spacing:-0.192px;left:950.70px;">Phòng họp 503</span>
<span style="position:absolute;white-space:nowrap;top:491px;line-height:19px;font-size:13px;color:#222;right:378.80px;">1</span>
<span style="position:absolute;white-space:nowrap;top:491px;line-height:19px;font-size:13px;color:#222;right:219.00px;">11.888.110</span>
<span style="position:absolute;white-space:nowrap;top:491px;line-height:19px;font-size:13px;color:#222;right:19.00px;">11.888.110</span>
<div style="left:287.5px;top:552px;width:1338.5px;height:1px;background:#e9e9e9"></div>
<div class="cb" style="left:295px;top:527px"></div>
<span style="position:absolute;white-space:nowrap;top:526px;line-height:19px;font-size:13px;color:#222;left:340.98px;">9</span>
<div style="left:383px;top:526.60px;width:0;height:25.50px;border-left:1px dotted #8a8a8a"></div>
<div style="left:384px;top:541.10px;width:10px;height:0;border-top:1px dotted #8a8a8a"></div>
<span style="position:absolute;white-space:nowrap;top:526px;line-height:19px;font-size:13px;color:#222;letter-spacing:-0.501px;left:400.50px;">TS481</span>
<span style="position:absolute;white-space:nowrap;top:526px;line-height:19px;font-size:13px;color:#222;letter-spacing:-0.265px;left:550.50px;">Máy tính ĐNA LCD Samsung 1...</span>
<span style="position:absolute;white-space:nowrap;top:526px;line-height:19px;font-size:13px;color:#222;letter-spacing:-0.131px;left:750.50px;">Máy vi tính để bàn</span>
<span style="position:absolute;white-space:nowrap;top:526px;line-height:19px;font-size:13px;color:#222;letter-spacing:-0.285px;left:950.70px;">Vụ Hợp tác Quốc tế - P402; 404...</span>
<span style="position:absolute;white-space:nowrap;top:526px;line-height:19px;font-size:13px;color:#222;right:378.80px;">1</span>
<span style="position:absolute;white-space:nowrap;top:526px;line-height:19px;font-size:13px;color:#222;right:219.00px;">12.322.900</span>
<span style="position:absolute;white-space:nowrap;top:526px;line-height:19px;font-size:13px;color:#222;right:19.00px;">12.322.900</span>
<div style="left:287.5px;top:587px;width:1338.5px;height:1px;background:#e9e9e9"></div>
<div class="cb" style="left:295px;top:562px"></div>
<span style="position:absolute;white-space:nowrap;top:561px;line-height:19px;font-size:13px;color:#222;left:337.37px;">10</span>
<div style="left:383px;top:561.60px;width:0;height:25.50px;border-left:1px dotted #8a8a8a"></div>
<div style="left:384px;top:576.10px;width:10px;height:0;border-top:1px dotted #8a8a8a"></div>
<span style="position:absolute;white-space:nowrap;top:561px;line-height:19px;font-size:13px;color:#222;letter-spacing:-0.501px;left:400.50px;">TS491</span>
<span style="position:absolute;white-space:nowrap;top:561px;line-height:19px;font-size:13px;color:#222;letter-spacing:-0.195px;left:550.50px;">Phần mềm văn phòng điện tử ...</span>
<span style="position:absolute;white-space:nowrap;top:561px;line-height:19px;font-size:13px;color:#222;letter-spacing:-0.155px;left:750.50px;">Phần mềm ứng dụng</span>
<span style="position:absolute;white-space:nowrap;top:561px;line-height:19px;font-size:13px;color:#222;letter-spacing:-0.401px;left:950.70px;">Phòng HCTH</span>
<span style="position:absolute;white-space:nowrap;top:561px;line-height:19px;font-size:13px;color:#222;right:378.80px;">1</span>
<span style="position:absolute;white-space:nowrap;top:561px;line-height:19px;font-size:13px;color:#222;right:219.00px;">330.000.000</span>
<span style="position:absolute;white-space:nowrap;top:561px;line-height:19px;font-size:13px;color:#222;right:19.00px;">206.250.000</span>
<div style="left:287.5px;top:622px;width:1338.5px;height:1px;background:#e9e9e9"></div>
<div class="cb" style="left:295px;top:597px"></div>
<span style="position:absolute;white-space:nowrap;top:596px;line-height:19px;font-size:13px;color:#222;left:337.85px;">11</span>
<div style="left:383px;top:596.60px;width:0;height:25.50px;border-left:1px dotted #8a8a8a"></div>
<div style="left:384px;top:611.10px;width:10px;height:0;border-top:1px dotted #8a8a8a"></div>
<span style="position:absolute;white-space:nowrap;top:596px;line-height:19px;font-size:13px;color:#222;letter-spacing:-0.501px;left:400.50px;">TS521</span>
<span style="position:absolute;white-space:nowrap;top:596px;line-height:19px;font-size:13px;color:#222;letter-spacing:-0.165px;left:550.50px;">Thiết bị hệ thống quản lý và giá...</span>
<span style="position:absolute;white-space:nowrap;top:596px;line-height:19px;font-size:13px;color:#222;letter-spacing:-0.044px;left:750.50px;">Máy móc, thiết bị khác</span>
<span style="position:absolute;white-space:nowrap;top:596px;line-height:19px;font-size:13px;color:#222;letter-spacing:-0.246px;left:950.70px;">Bộ phận bảo vệ Nghĩa Đô</span>
<span style="position:absolute;white-space:nowrap;top:596px;line-height:19px;font-size:13px;color:#222;right:378.80px;">1</span>
<span style="position:absolute;white-space:nowrap;top:596px;line-height:19px;font-size:13px;color:#222;right:219.00px;">133.882.000</span>
<span style="position:absolute;white-space:nowrap;top:596px;line-height:19px;font-size:13px;color:#222;right:19.00px;">133.882.000</span>
<div style="left:287.5px;top:657px;width:1338.5px;height:1px;background:#e9e9e9"></div>
<div class="cb" style="left:295px;top:632px"></div>
<span style="position:absolute;white-space:nowrap;top:631px;line-height:19px;font-size:13px;color:#222;left:337.37px;">12</span>
<div style="left:383px;top:631.60px;width:0;height:25.50px;border-left:1px dotted #8a8a8a"></div>
<div style="left:384px;top:646.10px;width:10px;height:0;border-top:1px dotted #8a8a8a"></div>
<span style="position:absolute;white-space:nowrap;top:631px;line-height:19px;font-size:13px;color:#222;letter-spacing:-0.501px;left:400.50px;">TS550</span>
<span style="position:absolute;white-space:nowrap;top:631px;line-height:19px;font-size:13px;color:#222;letter-spacing:-0.209px;left:550.50px;">Cầu thang thép tầng 3, nhà 3 tầ...</span>
<span style="position:absolute;white-space:nowrap;top:631px;line-height:19px;font-size:13px;color:#222;letter-spacing:-0.08px;left:750.50px;">Các vật kiến trúc khác</span>
<span style="position:absolute;white-space:nowrap;top:631px;line-height:19px;font-size:13px;color:#222;letter-spacing:-0.176px;left:950.70px;">Tài sản khối Văn phòng</span>
<span style="position:absolute;white-space:nowrap;top:631px;line-height:19px;font-size:13px;color:#222;right:378.80px;">1</span>
<span style="position:absolute;white-space:nowrap;top:631px;line-height:19px;font-size:13px;color:#222;right:219.00px;">95.239.366</span>
<span style="position:absolute;white-space:nowrap;top:631px;line-height:19px;font-size:13px;color:#222;right:19.00px;">95.239.366</span>
<div style="left:287.5px;top:692px;width:1338.5px;height:1px;background:#e9e9e9"></div>
<div class="cb" style="left:295px;top:667px"></div>
<span style="position:absolute;white-space:nowrap;top:666px;line-height:19px;font-size:13px;color:#222;left:337.37px;">13</span>
<div style="left:383px;top:666.60px;width:0;height:25.50px;border-left:1px dotted #8a8a8a"></div>
<div style="left:384px;top:681.10px;width:10px;height:0;border-top:1px dotted #8a8a8a"></div>
<span style="position:absolute;white-space:nowrap;top:666px;line-height:19px;font-size:13px;color:#222;letter-spacing:-0.501px;left:400.50px;">TS565</span>
<span style="position:absolute;white-space:nowrap;top:666px;line-height:19px;font-size:13px;color:#222;letter-spacing:-0.173px;left:550.50px;">Máy hủy tài liệu (G01- Văn thư)</span>
<span style="position:absolute;white-space:nowrap;top:666px;line-height:19px;font-size:13px;color:#222;letter-spacing:-0.122px;left:750.50px;">Máy hủy tài liệu</span>
<span style="position:absolute;white-space:nowrap;top:666px;line-height:19px;font-size:13px;color:#222;letter-spacing:-0.286px;left:950.70px;">Phòng PTCT -Hà Minh Hiệp(P2...</span>
<span style="position:absolute;white-space:nowrap;top:666px;line-height:19px;font-size:13px;color:#222;right:378.80px;">1</span>
<span style="position:absolute;white-space:nowrap;top:666px;line-height:19px;font-size:13px;color:#222;right:219.00px;">10.787.385</span>
<span style="position:absolute;white-space:nowrap;top:666px;line-height:19px;font-size:13px;color:#222;right:19.00px;">10.787.385</span>
<div style="left:287.5px;top:727px;width:1338.5px;height:1px;background:#e9e9e9"></div>
<div class="cb" style="left:295px;top:702px"></div>
<span style="position:absolute;white-space:nowrap;top:701px;line-height:19px;font-size:13px;color:#222;left:337.37px;">14</span>
<div style="left:383px;top:701.60px;width:0;height:25.50px;border-left:1px dotted #8a8a8a"></div>
<div style="left:384px;top:716.10px;width:10px;height:0;border-top:1px dotted #8a8a8a"></div>
<span style="position:absolute;white-space:nowrap;top:701px;line-height:19px;font-size:13px;color:#222;letter-spacing:-0.501px;left:400.50px;">TS574</span>
<span style="position:absolute;white-space:nowrap;top:701px;line-height:19px;font-size:13px;color:#222;letter-spacing:-0.143px;left:550.50px;">Máy điều hòa nhiệt độ Funiki tủ...</span>
<span style="position:absolute;white-space:nowrap;top:701px;line-height:19px;font-size:13px;color:#222;letter-spacing:-0.107px;left:750.50px;">Máy điều hòa không khí</span>
<span style="position:absolute;white-space:nowrap;top:701px;line-height:19px;font-size:13px;color:#222;letter-spacing:-0.237px;left:950.70px;">Tài vụ 3 Văn phòng Tổng cục - ...</span>
<span style="position:absolute;white-space:nowrap;top:701px;line-height:19px;font-size:13px;color:#222;right:378.80px;">1</span>
<span style="position:absolute;white-space:nowrap;top:701px;line-height:19px;font-size:13px;color:#222;right:219.00px;">31.753.590</span>
<span style="position:absolute;white-space:nowrap;top:701px;line-height:19px;font-size:13px;color:#222;right:19.00px;">31.753.590</span>
</div>
<div style="left:287.5px;top:716.3px;width:1338.5px;height:34.90px;background:#f4f4f4"></div>
<span style="position:absolute;white-space:nowrap;top:724px;line-height:19px;font-size:13px;color:#222;font-weight:bold;right:379.10px;letter-spacing:0.150px;">13.104</span>
<span style="position:absolute;white-space:nowrap;top:724px;line-height:19px;font-size:13px;color:#222;font-weight:bold;right:219.40px;letter-spacing:0.157px;">725.359.789.728</span>
<span style="position:absolute;white-space:nowrap;top:724px;line-height:19px;font-size:13px;color:#222;font-weight:bold;right:19.10px;letter-spacing:0.141px;">22.685.040.184</span>
<div style="left:287.5px;top:751px;width:1220.5px;height:4.600px;background:#d1d1d1"></div>
<div style="left:1508px;top:751px;width:118px;height:4.600px;background:#f4f4f4"></div>
<div style="left:318.90px;top:166px;width:1px;height:585px;background:#eaeaea"></div>
<div style="left:368.80px;top:166px;width:1px;height:585px;background:#eaeaea"></div>
<div style="left:538.90px;top:166px;width:1px;height:585px;background:#eaeaea"></div>
<div style="left:739.20px;top:166px;width:1px;height:585px;background:#eaeaea"></div>
<div style="left:939.10px;top:166px;width:1px;height:585px;background:#eaeaea"></div>
<div style="left:1139.50px;top:166px;width:1px;height:585px;background:#eaeaea"></div>
<div style="left:1259.50px;top:166px;width:1px;height:585px;background:#eaeaea"></div>
<div style="left:1418.50px;top:166px;width:1px;height:585px;background:#eaeaea"></div>
<div style="left:1618.90px;top:166px;width:1px;height:585px;background:#eaeaea"></div>
<span style="position:absolute;white-space:nowrap;top:174px;line-height:19px;font-size:13px;color:#212121;font-weight:bold;letter-spacing:-0.427px;left:332.60px;">STT</span>
<span style="position:absolute;white-space:nowrap;top:174px;line-height:19px;font-size:13px;color:#212121;font-weight:bold;letter-spacing:-0.251px;left:380.00px;">Mã tài sản</span>
<span style="position:absolute;white-space:nowrap;top:174px;line-height:19px;font-size:13px;color:#212121;font-weight:bold;letter-spacing:-0.431px;left:550.20px;">Tên tài sản</span>
<span style="position:absolute;white-space:nowrap;top:174px;line-height:19px;font-size:13px;color:#212121;font-weight:bold;letter-spacing:-0.411px;left:750.10px;">Loại tài sản</span>
<span style="position:absolute;white-space:nowrap;top:174px;line-height:19px;font-size:13px;color:#212121;font-weight:bold;letter-spacing:-0.28px;display:inline-block;transform:scaleX(0.9450);transform-origin:0 50%;left:950.00px;">Bộ phận sử dụng</span>
<span style="position:absolute;white-space:nowrap;top:174px;line-height:19px;font-size:13px;color:#212121;font-weight:bold;letter-spacing:-0.28px;display:inline-block;transform:scaleX(0.9111);transform-origin:0 50%;left:1197.30px;">Số lượng</span>
<span style="position:absolute;white-space:nowrap;top:174px;line-height:19px;font-size:13px;color:#212121;font-weight:bold;letter-spacing:-0.28px;display:inline-block;transform:scaleX(0.9697);transform-origin:0 50%;left:1343.50px;">Nguyên giá</span>
<span style="position:absolute;white-space:nowrap;top:174px;line-height:19px;font-size:13px;color:#212121;font-weight:bold;letter-spacing:-0.452px;left:1519.10px;">Hao mòn lũy kế</span>
<div class="cb" style="left:295px;top:176px"></div>
<div class="fin" style="left:373.0px;width:162.7px"></div>
<div style="left:511.1px;top:206px;width:1px;height:26px;background:#d0d0d0"></div>
<svg style="left:516.8px;top:211.8px" width="14" height="15" viewBox="0 0 14 15" fill="#fff" stroke="#5a5a5a" stroke-width=".95" stroke-linejoin="round"><path d="M0.700 1.400 H13.300 L9.300 7.600 V14 L5 11.900 V7.600z"/><path d="M1.200 1 H12.800" stroke-width=".8"/></svg>
<div class="fin" style="left:543.1px;width:192.9px"></div>
<div style="left:711.4px;top:206px;width:1px;height:26px;background:#d0d0d0"></div>
<svg style="left:717.1px;top:211.8px" width="14" height="15" viewBox="0 0 14 15" fill="#fff" stroke="#5a5a5a" stroke-width=".95" stroke-linejoin="round"><path d="M0.700 1.400 H13.300 L9.300 7.600 V14 L5 11.900 V7.600z"/><path d="M1.200 1 H12.800" stroke-width=".8"/></svg>
<div class="fin" style="left:743.4px;width:192.5px"></div>
<svg style="left:896.0px;top:215px" width="7.400" height="4.900" viewBox="0 0 8 5" fill="#0a0a0a"><path d="M0.600 0 H7.400 Q8.300 0 7.700 0.800 L4.600 4.600 Q4 5.200 3.400 4.600 L0.300 0.800 Q-0.300 0 0.600 0z"/></svg>
<svg style="left:915.2px;top:211.8px" width="14" height="15" viewBox="0 0 14 15" fill="#fff" stroke="#5a5a5a" stroke-width=".95" stroke-linejoin="round"><path d="M0.700 1.400 H13.300 L9.300 7.600 V14 L5 11.900 V7.600z"/><path d="M1.200 1 H12.800" stroke-width=".8"/></svg>
<div class="fin" style="left:943.3px;width:193.0px"></div>
<svg style="left:1096.4px;top:215px" width="7.400" height="4.900" viewBox="0 0 8 5" fill="#0a0a0a"><path d="M0.600 0 H7.400 Q8.300 0 7.700 0.800 L4.600 4.600 Q4 5.200 3.400 4.600 L0.300 0.800 Q-0.300 0 0.600 0z"/></svg>
<svg style="left:1115.6px;top:211.8px" width="14" height="15" viewBox="0 0 14 15" fill="#fff" stroke="#5a5a5a" stroke-width=".95" stroke-linejoin="round"><path d="M0.700 1.400 H13.300 L9.300 7.600 V14 L5 11.900 V7.600z"/><path d="M1.200 1 H12.800" stroke-width=".8"/></svg>
<div class="fin" style="left:1143.5px;width:112.4px"></div>
<div style="left:1173.4px;top:206px;width:1px;height:26px;background:#d0d0d0"></div>
<span style="position:absolute;white-space:nowrap;top:210px;line-height:18px;font-size:12px;color:#555;left:1155.60px;">=</span>
<div class="fin" style="left:1263.5px;width:151.4px"></div>
<div style="left:1293.4px;top:206px;width:1px;height:26px;background:#d0d0d0"></div>
<span style="position:absolute;white-space:nowrap;top:210px;line-height:18px;font-size:12px;color:#555;left:1275.60px;">=</span>
<div class="fin" style="left:1422.5px;width:192.8px"></div>
<div style="left:1452.4px;top:206px;width:1px;height:26px;background:#d0d0d0"></div>
<span style="position:absolute;white-space:nowrap;top:210px;line-height:18px;font-size:12px;color:#555;left:1434.60px;">=</span>
<div class="fin" style="left:1623.400px;width:10px"></div>
<div style="left:1610px;top:275px;width:16px;height:90px;background:#4262f0;border-radius:6px 0 0 6px;box-shadow:0 1px 3px rgba(0,0,0,.25)"></div>
<svg style="left:1615px;top:315.500px" width="6" height="10" viewBox="0 0 6 10" fill="none" stroke="#fff" stroke-width="1.600" stroke-linecap="round" stroke-linejoin="round"><path d="M4.800 1.200 L1.400 5 L4.800 8.800"/></svg>
<div style="left:1613px;top:551px;width:13px;height:204px;background:linear-gradient(90deg,rgba(105,105,105,0),rgba(105,105,105,.22) 40%,rgba(110,110,110,.8));-webkit-mask-image:linear-gradient(180deg,transparent,#000 24%,#000 92%,transparent);mask-image:linear-gradient(180deg,transparent,#000 24%,#000 92%,transparent)"></div>
<div style="left:0;top:0;width:1628px;height:2px;background:#a8a8a8"></div>
<div style="left:0;top:0;width:2px;height:758px;background:#a8a8a8"></div>
<div style="left:1625.800px;top:0;width:2.200px;height:758px;background:#a8a8a8"></div>
<div style="left:0;top:755.200px;width:1628px;height:2.800px;background:#a8a8a8"></div>
</div>
</body>
</html>
